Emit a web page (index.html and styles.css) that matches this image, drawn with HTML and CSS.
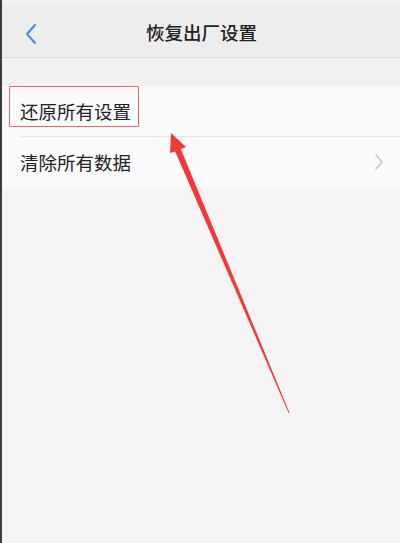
FILE: index.html
```html
<!DOCTYPE html>
<html lang="zh-CN">
<head>
<meta charset="utf-8">
<link rel="stylesheet" href="styles.css">
</head>
<body>
<div class="screen">
  <div class="statusbar"></div>
  <header class="navbar">
    <svg class="back" width="14" height="22" viewBox="0 0 14 22"><path d="M11 2 L3 11 L11 20" fill="none" stroke="#3d8fd8" stroke-width="2" stroke-linecap="round" stroke-linejoin="round"/></svg>
    <h1 class="title">恢复出厂设置</h1>
  </header>
  <div class="spacer"></div>
  <ul class="list">
    <li class="row row-first">
      <span class="label">还原所有设置</span>
      <span class="highlight"></span>
    </li>
    <li class="row">
      <span class="label">清除所有数据</span>
      <svg class="chev" width="10" height="18" viewBox="0 0 10 18"><path d="M2 2 L8 9 L2 16" fill="none" stroke="#c6c6c6" stroke-width="1.6" stroke-linecap="round" stroke-linejoin="round"/></svg>
    </li>
  </ul>
  <svg class="arrow" width="400" height="543" viewBox="0 0 400 543">
    <polygon points="171,133 186,147 180.8,149 289.6,413 288.6,413 175.2,151.4 170,153" fill="#f23838"/>
  </svg>
</div>
</body>
</html>
```

FILE: styles.css
```css
html, body {
  margin: 0;
  padding: 0;
  background: #f4f4f4;
}
body {
  font-family: "Noto Sans CJK SC", "Noto Sans", sans-serif;
  color: #222;
}
.screen {
  position: relative;
  width: 398px;
  height: 543px;
  border-left: 2px solid #3a3a3a;
  background: #f4f4f4;
  overflow: hidden;
}
.statusbar {
  height: 3px;
  background: #f3f3f3;
}
.navbar {
  height: 54px;
  background: #ededed;
  border-bottom: 1px solid #dcdcdc;
  display: flex;
  align-items: center;
  justify-content: center;
  position: relative;
}
.back {
  position: absolute;
  left: 22px;
  top: 20px;
}
.title {
  margin: 4px 0 0;
  font-size: 18.5px;
  font-weight: 500;
  color: #222;
  padding-left: 1px;
}
.spacer {
  height: 28px;
  background: #f1f1f1;
}
.list {
  list-style: none;
  margin: 0;
  padding: 0;
  background: #fafafa;
}
.row {
  position: relative;
  height: 50px;
  display: flex;
  align-items: center;
  padding: 0 16px 0 18px;
  justify-content: space-between;
}
.row-first {
  border-bottom: 1px solid #e8e8e8;
  margin-left: 18px;
  padding-left: 0;
}
.label {
  font-size: 18.5px;
  color: #222;
}
.highlight {
  position: absolute;
  left: -11px;
  top: 0;
  width: 128px;
  height: 39px;
  border: 1.5px solid #e46a6a;
  border-radius: 1px;
}
.arrow {
  position: absolute;
  left: -2px;
  top: 0;
  pointer-events: none;
}
```
